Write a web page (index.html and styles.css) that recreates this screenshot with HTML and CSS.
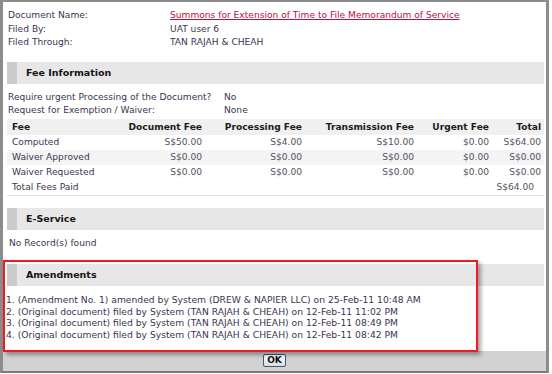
FILE: index.html
```html
<!DOCTYPE html>
<html>
<head>
    <title>Document Details</title>
    <link rel="stylesheet" href="styles.css">
</head>
<body>
    <div class="frame">
        <!-- Document info -->
        <table class="info">
            <colgroup><col class="info-label"><col></colgroup>
            <tr><td>Document Name:</td><td><a href="#">Summons for Extension of Time to File Memorandum of Service</a></td></tr>
            <tr><td>Filed By:</td><td>UAT user 6</td></tr>
            <tr><td>Filed Through:</td><td>TAN RAJAH &amp; CHEAH</td></tr>
        </table>

        <!-- Fee Information -->
        <div class="section-head">Fee Information</div>
        <table class="kv">
            <colgroup><col class="kv-label"><col></colgroup>
            <tr><td>Require urgent Processing of the Document?</td><td>No</td></tr>
            <tr><td>Request for Exemption / Waiver:</td><td>None</td></tr>
        </table>
        <table class="fees">
            <colgroup>
                <col class="c-fee"><col class="c-doc"><col class="c-proc">
                <col class="c-trans"><col class="c-urg"><col class="c-total">
            </colgroup>
            <tr class="head">
                <th class="left">Fee</th>
                <th>Document Fee</th>
                <th>Processing Fee</th>
                <th>Transmission Fee</th>
                <th>Urgent Fee</th>
                <th>Total</th>
            </tr>
            <tr>
                <td class="left">Computed</td>
                <td>S$50.00</td><td>S$4.00</td><td>S$10.00</td><td>$0.00</td><td>S$64.00</td>
            </tr>
            <tr class="shade">
                <td class="left">Waiver Approved</td>
                <td>S$0.00</td><td>S$0.00</td><td>S$0.00</td><td>$0.00</td><td>S$0.00</td>
            </tr>
            <tr>
                <td class="left">Waiver Requested</td>
                <td>S$0.00</td><td>S$0.00</td><td>S$0.00</td><td>$0.00</td><td>S$0.00</td>
            </tr>
            <tr class="paid">
                <td class="left">Total Fees Paid</td>
                <td></td><td></td><td></td><td></td><td class="paid-total">S$64.00</td>
            </tr>
        </table>

        <!-- E-Service -->
        <div class="section-head">E-Service</div>
        <p class="empty">No Record(s) found</p>

        <!-- Amendments -->
        <div class="section-head">Amendments</div>
        <ol class="amend">
            <li>1. (Amendment No. 1) amended by System (DREW &amp; NAPIER LLC) on 25-Feb-11 10:48 AM</li>
            <li>2. (Original document) filed by System (TAN RAJAH &amp; CHEAH) on 12-Feb-11 11:02 PM</li>
            <li>3. (Original document) filed by System (TAN RAJAH &amp; CHEAH) on 12-Feb-11 08:49 PM</li>
            <li>4. (Original document) filed by System (TAN RAJAH &amp; CHEAH) on 12-Feb-11 08:42 PM</li>
        </ol>

        <div class="actions"><button class="ok">OK</button></div>

        <div class="highlight"></div>
    </div>
</body>
</html>
```

FILE: styles.css
```css
body {
    margin: 0;
    background: #fff;
    font-family: "DejaVu Sans", Verdana, sans-serif;
    font-size: 9.1px;
    color: #3b3450;
}

.frame {
    position: relative;
    box-sizing: content-box;
    width: 537px;
    padding: 7px 2px 0 4px;
    border-left: 3px solid #8c8c8c;
    border-right: 3px solid #8c8c8c;
    border-top: 2px solid #8c8c8c;
    border-bottom: 2px solid #7a7a7a;
}

table {
    border-collapse: collapse;
    table-layout: fixed;
    width: 100%;
}

td, th {
    padding: 0;
}

.info td {
    line-height: 13.5px;
    padding-left: 1px;
}

.info-label {
    width: 162px;
}

.info a {
    color: #b8103a;
}

.section-head {
    height: 22px;
    line-height: 22px;
    margin-top: 12px;
    padding-left: 9px;
    border-left: 10px solid #cbcbcb;
    background: #e7e7e7;
    font-size: 9.5px;
    font-weight: bold;
    color: #151515;
}

.kv {
    margin-top: 7.5px;
}

.kv td {
    line-height: 13px;
    padding-left: 1px;
}

.kv-label {
    width: 216px;
}

.fees {
    margin-top: 1.5px;
    border-bottom: 1px solid #e2e2e2;
}

.fees th, .fees td {
    text-align: right;
    padding-right: 3px;
    white-space: nowrap;
}

.fees .left {
    text-align: left;
    padding-left: 5px;
}

.fees th {
    height: 16px;
    font-weight: bold;
    color: #1c1c1c;
}

.fees .head {
    background: #f0f0f0;
}

.fees td {
    height: 15px;
    color: #55505e;
}

.fees td.left {
    color: #3b3450;
}

.fees .shade {
    background: #f4f4f4;
}

.fees .paid-total {
    padding-right: 10px;
}

.c-fee { width: 100px; }
.c-doc { width: 98px; }
.c-proc { width: 100px; }
.c-trans { width: 112px; }
.c-urg { width: 75px; }
.c-total { width: 52px; }

.empty {
    margin: 7.5px 0 0 2px;
    line-height: 13px;
}

.section-head + .empty + .section-head {
    margin-top: 13.5px;
}

.amend {
    list-style: none;
    margin: 8.5px 0 0 -1px;
    padding: 0;
    font-size: 9.2px;
    line-height: 11.7px;
}

.actions {
    margin: 10px -2px 0 -4px;
    height: 20px;
    background: #d2d2d2;
    display: flex;
    align-items: center;
    justify-content: center;
}

.ok {
    font-family: "DejaVu Sans", Verdana, sans-serif;
    font-size: 9px;
    font-weight: bold;
    color: #111;
    height: 13px;
    line-height: 11px;
    padding: 0 3px;
    border: 1px solid #3d5a7a;
    border-radius: 2px;
    background: linear-gradient(#ffffff, #dcdcdc);
    cursor: pointer;
}

/* red annotation box drawn over the amendments */
.highlight {
    position: absolute;
    left: 0;
    top: 258px;
    width: 471px;
    height: 88px;
    border: 2px solid #ec1c24;
    box-shadow: 3px 3px 4px rgba(0, 0, 0, 0.35);
    pointer-events: none;
}
```
